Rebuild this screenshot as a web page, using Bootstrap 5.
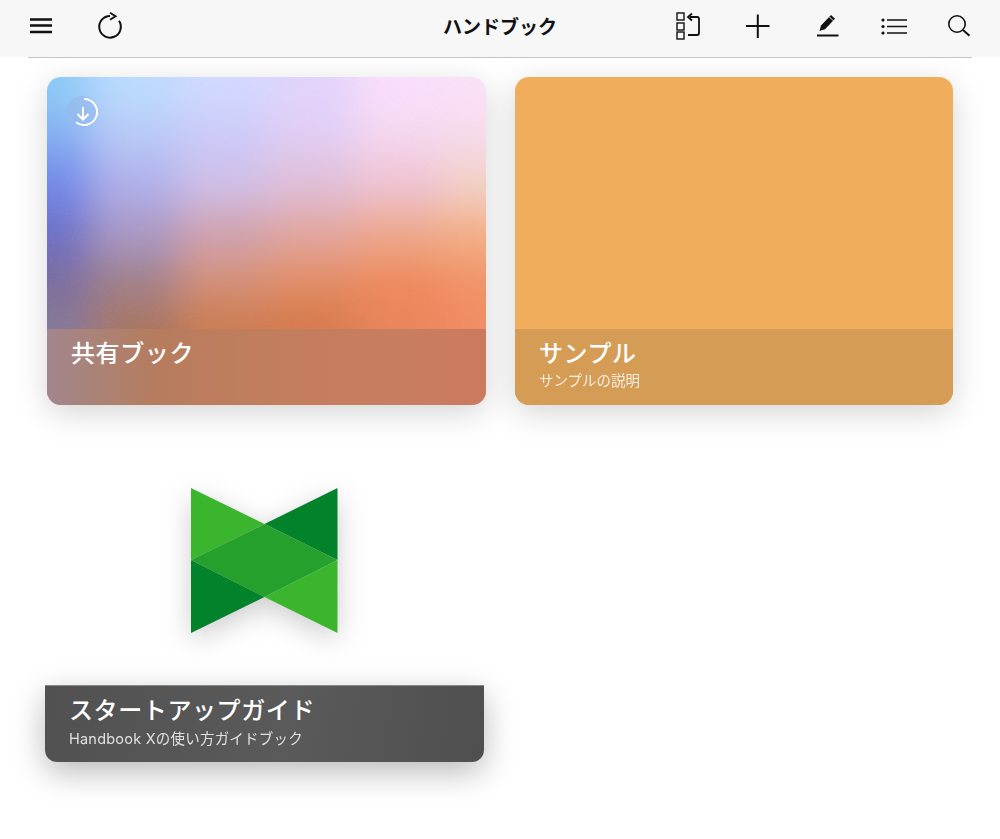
<!DOCTYPE html>
<html lang="ja">
<head>
<meta charset="utf-8">
<title>ハンドブック</title>
<link href="https://cdn.jsdelivr.net/npm/bootstrap@5.3.0/dist/css/bootstrap.min.css" rel="stylesheet">
<style>
html,body{height:100%;background:#fff;overflow:hidden}
body{font-family:"Liberation Sans","Noto Sans CJK JP",sans-serif}
.app-bar{height:57px;background:#f7f7f7;display:grid;grid-template-columns:1fr auto 1fr;align-items:center;position:relative;z-index:2}
.app-bar::after{content:"";position:absolute;left:28px;right:28px;top:57px;height:1px;background:#c4c4c4}
.app-title{font-size:19px;font-weight:700;color:#111;margin:0;font-family:"Noto Sans CJK JP",sans-serif;line-height:1;position:relative;top:-3px}
.bar-group{gap:40px;height:57px}
.bar-group svg{height:57px;display:block;fill:none;stroke:#111;stroke-width:2}
.left-group{padding-left:26px;gap:39px}
.right-group{padding-right:29px}
.shelf{display:grid;grid-template-columns:439px 438px;gap:29px;padding:20px 0 0 47px;position:relative}
.book{height:328px;border-radius:14px;position:relative;overflow:hidden}
.book-wrap{border-radius:14px;box-shadow:0 8px 32px rgba(0,0,0,.17)}
.cover-art{position:absolute;left:0;top:0;display:block}
.cover-plain{background:#f0ae5c}
.caption{position:absolute;left:0;right:0;bottom:0;height:76px;padding:5px 24px 0;color:#fff}
.cap-sky{background:linear-gradient(90deg,#a28590 0%,#a98378 10%,#b67c5e 25%,#c17e5d 50%,#c97d60 85%,#cb7a5f 100%)}
.cap-plain{background:#d49c55}
.cap-dark{background:linear-gradient(100deg,#515151 0%,#5a5a5a 55%,#4f4f4f 100%);border-top:1px solid #8a8a8a;padding-top:5px}
.cap-title{font-size:24px;letter-spacing:.6px;line-height:36px;font-weight:500;margin:0;font-family:"Noto Sans CJK JP",sans-serif}
.cap-sub{font-size:14.500px;line-height:20px;margin:1px 0 0;opacity:.82;font-weight:400;font-family:Inter,"Noto Sans CJK JP",sans-serif}
.cap-dark .cap-sub{letter-spacing:.22px;margin-top:2px}
.badge-dl{position:absolute;left:19px;top:19px;width:32px;height:32px;border-radius:50%;background:rgba(150,185,235,.65)}
.badge-dl svg{display:block;fill:none;stroke:#fff;stroke-width:2}
.guide{margin-left:-2px;width:439px;height:328px;display:flex;flex-direction:column;position:relative}
.guide-art{flex:1;min-height:0;display:flex;align-items:center;justify-content:center;padding-top:2px}
.guide-art svg{filter:drop-shadow(0 8px 14px rgba(0,0,0,.2));display:block}
.guide-strip{position:relative;height:77px;border-radius:0 0 12px 12px;box-shadow:0 10px 32px rgba(0,0,0,.28);flex:none}
.guide-strip .caption{top:0;border-radius:0 0 12px 12px;height:77px}
</style>
</head>
<body>
<header class="app-bar">
  <div class="d-flex align-items-center bar-group left-group">
    <svg width="30" viewBox="26 0 30 57"><path d="M30 19.500h22M30 25.500h22M30 32h22" stroke-width="2.400"/></svg>
    <svg width="30" viewBox="95 0 30 57"><path d="M110 16a10.800 10.800 0 1 0 9 4.800" /><path d="M110 12.800l5.600 3.400-5.600 3.600" stroke-width="1.800"/></svg>
  </div>
  <h1 class="app-title text-center">ハンドブック</h1>
  <div class="d-flex align-items-center justify-content-end bar-group right-group">
    <svg width="30" viewBox="673 0 30 57"><g stroke-width="1.400"><rect x="677" y="13" width="7" height="7"/><rect x="677" y="23" width="7" height="7"/><rect x="677" y="32" width="7" height="7"/><path d="M690 17h7a2 2 0 0 1 2 2v14a2 2 0 0 1-2 2h-9" stroke-width="1.800"/><path d="M692 13.500l-4 3.500 4 3.500" stroke-width="1.800"/></g></svg>
    <svg width="30" viewBox="743 0 30 57"><path d="M746 26h23.500M757.800 14.500v23.500"/></svg>
    <svg width="28" viewBox="813 0 28 57"><path d="M817 35.500h21.500"/><path d="M819.500 31l1.500-5.500 10-10.500 4 3.800-10 10.500z" fill="#111" stroke="none"/><path d="M829.500 17l3.800 3.800" stroke="#f7f7f7" stroke-width="1"/></svg>
    <svg width="26" viewBox="881 0 26 57"><path d="M887 20h20M887 26.500h20M887 33h20" stroke-width="1.600"/><g fill="#111" stroke="none"><circle cx="883" cy="20" r="1.600"/><circle cx="883" cy="26.500" r="1.600"/><circle cx="883" cy="33" r="1.600"/></g></svg>
    <svg width="24" viewBox="947 0 24 57"><circle cx="957" cy="24" r="8.200" stroke-width="1.600"/><path d="M963 30l6.500 5.800"/></svg>
  </div>
</header>
<main class="shelf">
  <div class="book-wrap">
    <article class="book">
      <svg class="cover-art" width="439" height="328" viewBox="0 0 439 328" aria-hidden="true">
        <defs>
          <filter id="soften" x="-20%" y="-20%" width="140%" height="140%"><feGaussianBlur stdDeviation="20"/></filter>
          <filter id="grain" x="0" y="0" width="100%" height="100%"><feTurbulence type="fractalNoise" baseFrequency=".9" numOctaves="2" seed="4"/><feColorMatrix values="0 0 0 0 .5 0 0 0 0 .5 0 0 0 0 .5 .22 0 0 0 -.09"/></filter>
        </defs>
        <g filter="url(#soften)">
          <g transform="translate(0,-60)">
            <rect x="-60" width="104" height="95" fill="#8ccbf8"/><rect x="44" width="88" height="95" fill="#bcdcff"/><rect x="132" width="88" height="95" fill="#d2daff"/><rect x="220" width="88" height="95" fill="#e2d4fd"/><rect x="308" width="88" height="95" fill="#fbdffe"/><rect x="396" width="104" height="95" fill="#fce2f8"/>
          </g>
          <g transform="translate(0,35)">
            <rect x="-60" width="104" height="45" fill="#84aef4"/><rect x="44" width="88" height="45" fill="#b8caf8"/><rect x="132" width="88" height="45" fill="#cccafa"/><rect x="220" width="88" height="45" fill="#e2cef6"/><rect x="308" width="88" height="45" fill="#f6d8f0"/><rect x="396" width="104" height="45" fill="#f8dcec"/>
          </g>
          <g transform="translate(0,80)">
            <rect x="-60" width="104" height="50" fill="#7088ea"/><rect x="44" width="88" height="50" fill="#b0b0ec"/><rect x="132" width="88" height="50" fill="#cfc0ea"/><rect x="220" width="88" height="50" fill="#e0c0da"/><rect x="308" width="88" height="50" fill="#f0c4d4"/><rect x="396" width="104" height="50" fill="#f3d2c8"/>
          </g>
          <g transform="translate(0,130)">
            <rect x="-60" width="104" height="50" fill="#6c70c8"/><rect x="44" width="88" height="50" fill="#a898c4"/><rect x="132" width="88" height="50" fill="#d0a2ae"/><rect x="220" width="88" height="50" fill="#e2a69e"/><rect x="308" width="88" height="50" fill="#eea888"/><rect x="396" width="104" height="50" fill="#f4b084"/>
          </g>
          <g transform="translate(0,180)">
            <rect x="-60" width="104" height="45" fill="#7a6c9e"/><rect x="44" width="88" height="45" fill="#a08088"/><rect x="132" width="88" height="45" fill="#d49076"/><rect x="220" width="88" height="45" fill="#e48c62"/><rect x="308" width="88" height="45" fill="#f0885a"/><rect x="396" width="104" height="45" fill="#f29268"/>
          </g>
          <g transform="translate(0,225)">
            <rect x="-60" width="104" height="105" fill="#847898"/><rect x="44" width="88" height="105" fill="#a87460"/><rect x="132" width="88" height="105" fill="#cc7a50"/><rect x="220" width="88" height="105" fill="#d6784c"/><rect x="308" width="88" height="105" fill="#ea845a"/><rect x="396" width="104" height="105" fill="#f28c62"/>
          </g>
        </g>
        <rect width="439" height="328" filter="url(#grain)"/>
      </svg>
      <div class="badge-dl"><svg width="32" height="32" viewBox="66 96 32 32"><path d="M84 99a13 13 0 1 1-8 23.200"/><path d="M83 107v12M77.500 114l5.500 5.500 5.500-5.500"/></svg></div>
      <div class="caption cap-sky"><h2 class="cap-title">共有ブック</h2></div>
    </article>
  </div>
  <div class="book-wrap">
    <article class="book cover-plain">
      <div class="caption cap-plain"><h2 class="cap-title">サンプル</h2><p class="cap-sub">サンプルの説明</p></div>
    </article>
  </div>
  <article class="guide">
    <div class="guide-art">
      <svg width="148" height="147" viewBox="191 487 148 147">
        <polygon points="191,488 264.500,524 191,560" fill="#3bb52e"/>
        <polygon points="337.500,488 337.500,560 264.500,524" fill="#03822c"/>
        <polygon points="191,560 264.500,524 337.500,560 264.500,597" fill="#26a02c"/>
        <polygon points="191,560 264.500,597 191,633" fill="#03822c"/>
        <polygon points="337.500,633 337.500,560 264.500,597" fill="#3bb52e"/>
      </svg>
    </div>
    <div class="guide-strip">
      <div class="caption cap-dark"><h2 class="cap-title">スタートアップガイド</h2><p class="cap-sub">Handbook Xの使い方ガイドブック</p></div>
    </div>
  </article>
</main>
<script src="https://cdn.jsdelivr.net/npm/bootstrap@5.3.0/dist/js/bootstrap.bundle.min.js"></script>
</body>
</html>
